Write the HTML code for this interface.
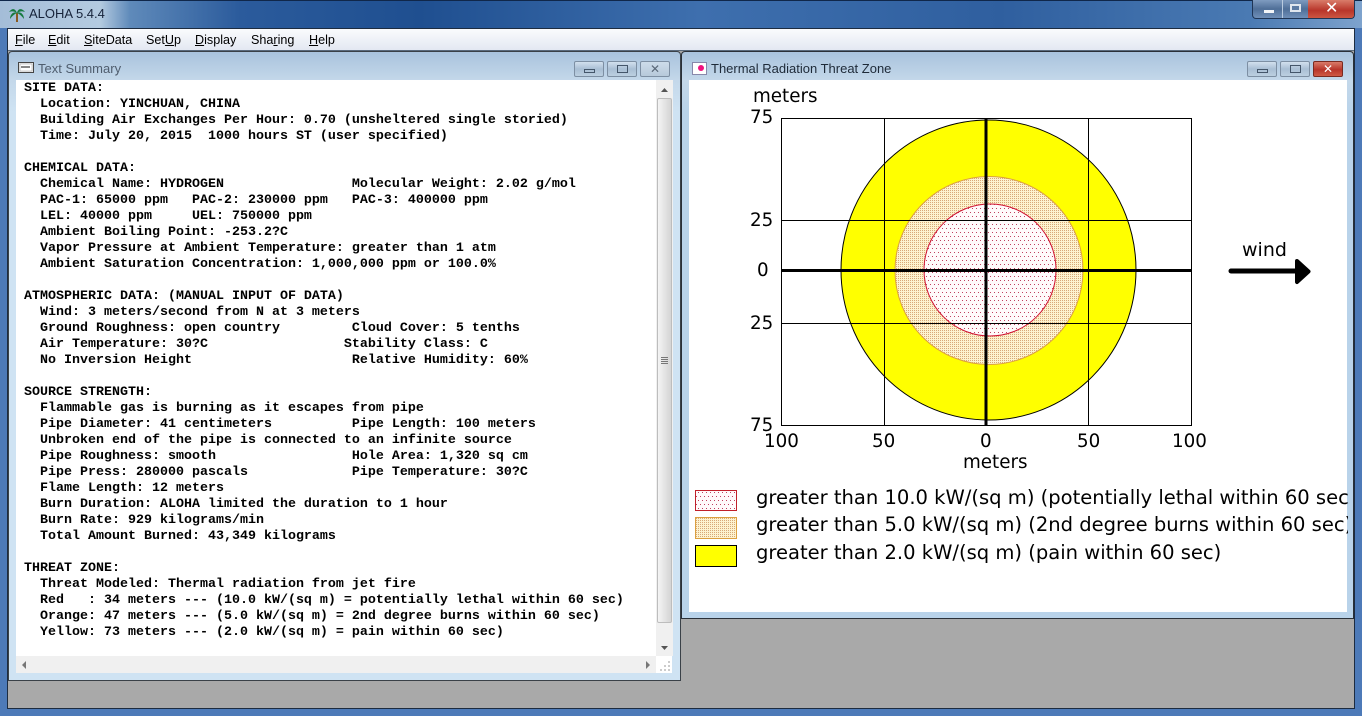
<!DOCTYPE html>
<html><head><meta charset="utf-8"><style>
html,body{margin:0;padding:0;width:1362px;height:716px;overflow:hidden;background:#a9a9a9}
.a{position:absolute}
#page{position:relative;width:1362px;height:716px;overflow:hidden;font-family:"DejaVu Sans","Liberation Sans",sans-serif}
pre{margin:0;font:bold 13.33px/16px "Liberation Mono",monospace;color:#000}
.menu{font:12.6px/16px "Liberation Sans",sans-serif;color:#000;position:absolute;top:32px}
.t{font:13px/16px "Liberation Sans",sans-serif;position:absolute}
.btn{position:absolute;box-sizing:border-box;border:1px solid #7d8fa3;border-radius:2px;height:16px;width:30px;background:linear-gradient(#d2e0ee,#a9bfd4 50%,#bccfe0)}
</style></head><body><div id="page">
<div class="a" style="left:0;top:0;width:1362px;height:716px;background:#4d7ab8"></div>
<div class="a" style="left:0;top:0;width:1362px;height:28px;background:linear-gradient(90deg,#a4bdd8 0,#b4cbe0 100px,#5f8aba 130px,#2b5b9c 240px,#1f4f90 420px,#3e6fae 700px,#2f5f9f 1000px,#4a7ab3 1250px,#7ea3cd 1362px);border-top:1px solid #10274a;box-sizing:border-box"></div>
<div class="a" style="left:7px;top:28px;width:1348px;height:681px;background:#a9a9a9;border:1px solid #1d2c40;box-sizing:border-box"></div>
<div class="a" style="left:8px;top:29px;width:1346px;height:21px;background:linear-gradient(#fafbfd,#e3e8f2);border-bottom:1px solid #5a6a7c"></div>
<svg class="a" style="left:9px;top:7px" width="16" height="16" viewBox="0 0 16 16"><path d="M8 15V6" stroke="#8a5a20" stroke-width="2"/><path d="M8 6C6 1 3 1 0 5 3 4 5 4 8 6ZM8 6C9 1 13 1 16 5 13 4 11 4 8 6ZM8 6C5 4 1 7 1 12 4 8 6 7 8 6ZM8 6C11 4 15 7 15 12 12 8 10 7 8 6Z" fill="#167a40"/></svg>
<div class="t" style="left:29px;top:6px;color:#16233a">ALOHA 5.4.4</div>
<div class="a" style="left:1252px;top:0;width:103px;height:19px;border:1px solid #1f3555;border-top:0;border-radius:0 0 4px 4px;box-sizing:border-box;overflow:hidden;background:linear-gradient(#7f9cc0,#4f6f98 50%,#6f8fb8)">
<div class="a" style="right:0;top:0;width:46px;height:19px;background:linear-gradient(#d97c6a,#b8352a 55%,#cf5a45)"></div>
<div class="a" style="left:29px;top:0;width:1px;height:19px;background:#b9cbe0"></div>
<div class="a" style="left:11px;top:10px;width:10px;height:3px;background:#f2f5f8"></div>
<div class="a" style="left:37px;top:4px;width:11px;height:8px;border:2px solid #dfe6ee;box-sizing:border-box;background:#5c7ba3"></div>
<div class="a" style="left:72px;top:-2px;color:#fff;font:bold 16px/20px 'DejaVu Sans'">✕</div>
</div>
<span class="menu" style="left:15px"><u>F</u>ile</span>
<span class="menu" style="left:48px"><u>E</u>dit</span>
<span class="menu" style="left:84px"><u>S</u>iteData</span>
<span class="menu" style="left:146px">Set<u>U</u>p</span>
<span class="menu" style="left:195px"><u>D</u>isplay</span>
<span class="menu" style="left:251px">Sha<u>r</u>ing</span>
<span class="menu" style="left:309px"><u>H</u>elp</span>

<!-- Text Summary window -->
<div class="a" style="left:8px;top:51px;width:673px;height:630px;box-sizing:border-box;border:1px solid #3a4148;border-radius:4px 4px 0 0;background:linear-gradient(#a9c3dd 0,#c4d8ea 29px,#cfe3f3 60px)"></div>
<svg class="a" style="left:18px;top:62px" width="16" height="12"><rect x=".5" y=".5" width="15" height="10" fill="#eee" stroke="#444"/><rect x="2" y="2" width="12" height="7" fill="#fff" stroke="#999" stroke-width=".5"/><rect x="3" y="4" width="9" height="2" fill="#888"/></svg>
<div class="t" style="left:38px;top:61px;color:#4f5d6e">Text Summary</div>
<div class="btn" style="left:574px;top:61px"><div class="a" style="left:9px;top:7px;width:11px;height:4px;border:1px solid #44566a;box-sizing:border-box"></div></div>
<div class="btn" style="left:607px;top:61px"><div class="a" style="left:9px;top:3px;width:11px;height:8px;border:1px solid #44566a;box-sizing:border-box"></div></div>
<div class="btn" style="left:640px;top:61px;background:linear-gradient(#cddcea,#b7c9da)"><div class="a" style="left:9px;top:-1px;color:#5a6878;font:bold 12px/16px 'DejaVu Sans'">✕</div></div>
<div class="a" style="left:16px;top:80px;width:656px;height:593px;background:#fff"></div>
<pre class="a" style="left:24px;top:81px">SITE DATA:
  Location: YINCHUAN, CHINA
  Building Air Exchanges Per Hour: 0.70 (unsheltered single storied)
  Time: July 20, 2015  1000 hours ST (user specified)

CHEMICAL DATA:
  Chemical Name: HYDROGEN                Molecular Weight: 2.02 g/mol
  PAC-1: 65000 ppm   PAC-2: 230000 ppm   PAC-3: 400000 ppm
  LEL: 40000 ppm     UEL: 750000 ppm
  Ambient Boiling Point: -253.2?C
  Vapor Pressure at Ambient Temperature: greater than 1 atm
  Ambient Saturation Concentration: 1,000,000 ppm or 100.0%

ATMOSPHERIC DATA: (MANUAL INPUT OF DATA)
  Wind: 3 meters/second from N at 3 meters
  Ground Roughness: open country         Cloud Cover: 5 tenths
  Air Temperature: 30?C                 Stability Class: C
  No Inversion Height                    Relative Humidity: 60%

SOURCE STRENGTH:
  Flammable gas is burning as it escapes from pipe
  Pipe Diameter: 41 centimeters          Pipe Length: 100 meters
  Unbroken end of the pipe is connected to an infinite source
  Pipe Roughness: smooth                 Hole Area: 1,320 sq cm
  Pipe Press: 280000 pascals             Pipe Temperature: 30?C
  Flame Length: 12 meters
  Burn Duration: ALOHA limited the duration to 1 hour
  Burn Rate: 929 kilograms/min
  Total Amount Burned: 43,349 kilograms

THREAT ZONE:
  Threat Modeled: Thermal radiation from jet fire
  Red   : 34 meters --- (10.0 kW/(sq m) = potentially lethal within 60 sec)
  Orange: 47 meters --- (5.0 kW/(sq m) = 2nd degree burns within 60 sec)
  Yellow: 73 meters --- (2.0 kW/(sq m) = pain within 60 sec)</pre>
<!-- scrollbars -->
<div class="a" style="left:656px;top:80px;width:17px;height:576px;background:#f0f0f0"></div>
<div class="a" style="left:657px;top:98px;width:15px;height:525px;box-sizing:border-box;border:1px solid #bdbdbd;border-radius:2px;background:linear-gradient(90deg,#f4f4f4,#d4d4d4)"></div>
<div class="a" style="left:661px;top:357px;width:7px;height:7px;background:repeating-linear-gradient(#777 0 1px,transparent 1px 2px)"></div>
<svg class="a" style="left:656px;top:80px" width="17" height="580"><path d="M5 12 8.500 8 12 12Z" fill="#555"/><path d="M5 566 8.500 570 12 566Z" fill="#555"/></svg>
<div class="a" style="left:16px;top:656px;width:640px;height:17px;background:#f0f0f0"></div>
<svg class="a" style="left:16px;top:656px" width="656" height="17"><path d="M10 5 6 9 10 13Z" fill="#777"/><path d="M630 5 634 9 630 13Z" fill="#777"/><path d="M652 6h2M652 10h2M648 10h2M652 14h2M648 14h2M644 14h2" stroke="#999"/></svg>

<!-- Threat window -->
<div class="a" style="left:681px;top:51px;width:673px;height:568px;box-sizing:border-box;border:1px solid #2a3038;border-radius:4px 4px 0 0;background:linear-gradient(#a9c3dd 0,#c4d8ea 29px,#b9d3ea 60px)"></div>
<div class="a" style="left:692px;top:62px;width:15px;height:13px;background:#fff;border:1px solid #88a;box-sizing:border-box"></div>
<div class="a" style="left:698px;top:65px;width:6px;height:6px;border-radius:50%;background:#f0127f"></div>
<div class="t" style="left:711px;top:61px;color:#1e2a38">Thermal Radiation Threat Zone</div>
<div class="btn" style="left:1247px;top:61px"><div class="a" style="left:9px;top:7px;width:11px;height:4px;border:1px solid #44566a;box-sizing:border-box"></div></div>
<div class="btn" style="left:1280px;top:61px"><div class="a" style="left:9px;top:3px;width:11px;height:8px;border:1px solid #44566a;box-sizing:border-box"></div></div>
<div class="btn" style="left:1313px;top:61px;background:linear-gradient(#d97c6a,#b8352a 55%,#cf5a45);border-color:#7a2a20"><div class="a" style="left:9px;top:-1px;color:#fff;font:bold 12px/16px 'DejaVu Sans'">✕</div></div>
<svg class="a" style="left:0;top:0" width="1362" height="716" font-family="DejaVu Sans" font-size="18.300" fill="#000">
<defs>
<pattern id="r" width="4" height="8" patternUnits="userSpaceOnUse"><rect width="4" height="8" fill="#fffafb"/><rect x="0" y="0" width="1" height="1" fill="#c04060"/><rect x="2" y="4" width="1" height="1" fill="#c04060"/></pattern>
<pattern id="o" width="2" height="2" patternUnits="userSpaceOnUse"><rect width="2" height="2" fill="#fdf3cf"/><rect width="1" height="1" fill="#d8a878"/></pattern>
<clipPath id="c"><rect x="689" y="80" width="659" height="532"/></clipPath>
</defs>
<rect x="689" y="80" width="658" height="532" fill="#fff"/>
<rect x="781.500" y="118.500" width="410" height="307" fill="none" stroke="#000"/>
<ellipse cx="988.500" cy="270" rx="147.500" ry="150" fill="#ff0" stroke="#000"/>
<circle cx="989" cy="270.500" r="94" fill="url(#o)" stroke="#dca040"/>
<circle cx="990" cy="270" r="66" fill="url(#r)" stroke="#d01030"/>
<path d="M884.500 118V425M1088.500 118V425M781 220.500H1191M781 323.500H1191" stroke="#000" fill="none"/>
<rect x="984.500" y="118" width="3" height="307" fill="#000"/>
<rect x="781" y="269" width="410" height="3" fill="#000"/>
<text x="753" y="102">meters</text>
<text x="750" y="123">75</text><text x="750" y="226">25</text><text x="757" y="276">0</text><text x="750" y="329">25</text><text x="750" y="431">75</text>
<text x="764" y="447">100</text><text x="872" y="447">50</text><text x="980" y="447">0</text><text x="1077" y="447">50</text><text x="1172" y="447">100</text>
<text x="963" y="468">meters</text>
<text x="1242" y="256" font-size="19">wind</text>
<path d="M1231 271H1298" stroke="#000" stroke-width="5" stroke-linecap="round"/>
<path d="M1297 261 1308.500 271.500 1297 282Z" fill="#000" stroke="#000" stroke-width="4" stroke-linejoin="round"/>
<rect x="695.500" y="490.500" width="41" height="20" fill="url(#r)" stroke="#c0202a"/>
<rect x="695.500" y="517.500" width="41" height="21" fill="url(#o)" stroke="#dca040"/>
<rect x="695.500" y="545.500" width="41" height="21" fill="#ff0" stroke="#000"/>
<g clip-path="url(#c)" font-size="19.550">
<text x="756" y="504">greater than 10.0 kW/(sq m) (potentially lethal within 60 sec)</text>
<text x="756" y="531">greater than 5.0 kW/(sq m) (2nd degree burns within 60 sec)</text>
<text x="756" y="559">greater than 2.0 kW/(sq m) (pain within 60 sec)</text>
</g>
</svg>
</div></body></html>
